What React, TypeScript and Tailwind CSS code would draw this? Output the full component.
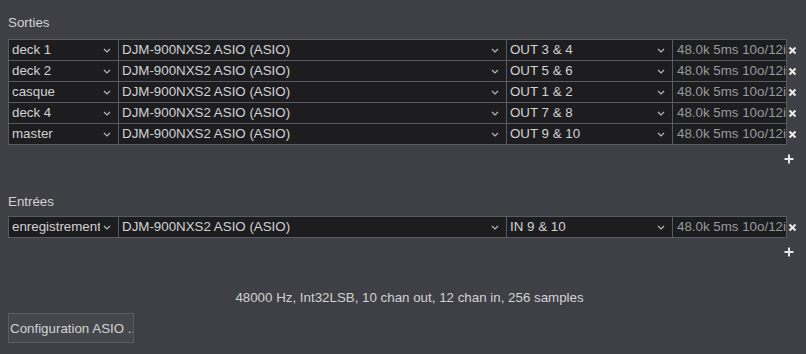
const outputs = [
  { name: 'deck 1', device: 'DJM-900NXS2 ASIO (ASIO)', channel: 'OUT 3 & 4' },
  { name: 'deck 2', device: 'DJM-900NXS2 ASIO (ASIO)', channel: 'OUT 5 & 6' },
  { name: 'casque', device: 'DJM-900NXS2 ASIO (ASIO)', channel: 'OUT 1 & 2' },
  { name: 'deck 4', device: 'DJM-900NXS2 ASIO (ASIO)', channel: 'OUT 7 & 8' },
  { name: 'master', device: 'DJM-900NXS2 ASIO (ASIO)', channel: 'OUT 9 & 10' },
];

const inputs = [
  { name: 'enregistrement', device: 'DJM-900NXS2 ASIO (ASIO)', channel: 'IN 9 & 10' },
];

const Chevron = () => (
  <svg width="8" height="5" viewBox="0 0 8 5" className="shrink-0">
    <path d="M1 1l3 3 3-3" fill="none" stroke="#b8b8b8" strokeWidth="1.2" />
  </svg>
);

const SelectCell = ({ value }: { value: string }) => (
  <div className="flex items-center border-r border-b border-[#5a5b60] bg-[#1d1d20] pl-[3px] pr-[7px] overflow-hidden">
    <span className="mr-[3px] flex-1 overflow-hidden whitespace-nowrap">{value}</span>
    <Chevron />
  </div>
);

type Row = { name: string; device: string; channel: string };

const RouteRow = ({ row, first }: { row: Row; first: boolean }) => (
  <div className="flex">
    <div
      className={
        first
          ? 'grid h-[22px] grid-cols-[110px_388px_166px_114px] border-l border-t border-[#5a5b60] leading-[20px]'
          : 'grid h-[21px] grid-cols-[110px_388px_166px_114px] border-l border-[#5a5b60] leading-[20px]'
      }
    >
      <SelectCell value={row.name} />
      <SelectCell value={row.device} />
      <SelectCell value={row.channel} />
      <div className="border-r border-b border-[#5a5b60] bg-[#1d1d20] pl-[4px] overflow-hidden whitespace-nowrap text-[#999a9d]">
        48.0k 5ms 10o/12in
      </div>
    </div>
    {/* remove button */}
    <div className="flex w-[11px] items-center justify-center">
      <svg width="9" height="9" viewBox="0 0 9 9">
        <path d="M1.5 1.5l6 6M7.5 1.5l-6 6" stroke="#ececec" strokeWidth="2" />
      </svg>
    </div>
  </div>
);

const Plus = () => (
  <div className="flex justify-end pr-[4px]">
    <svg width="10" height="16" viewBox="0 0 10 16">
      <path d="M5 3.5v9M0.5 8h9" stroke="#e8e8e8" strokeWidth="2" />
    </svg>
  </div>
);

const App = () => {
  return (
    <div className="h-[354px] w-[806px] overflow-hidden bg-[#3f4045] px-2 pt-[15px] text-[13.33px] leading-[15px] text-[#d2d2d4] [font-family:'Liberation_Sans',Arial,sans-serif]">
      <div>Sorties</div>
      <div className="mt-[9px]">
        {outputs.map((row, i) => (
          <RouteRow key={row.name} row={row} first={i === 0} />
        ))}
      </div>
      <div className="mt-[6px]">
        <Plus />
      </div>

      <div className="mt-[27px]">Entrées</div>
      <div className="mt-[7px]">
        {inputs.map((row) => (
          <RouteRow key={row.name} row={row} first />
        ))}
      </div>
      <div className="mt-[6px]">
        <Plus />
      </div>

      <div className="mt-[30px] pl-[13px] text-center">
        48000 Hz, Int32LSB, 10 chan out, 12 chan in, 256 samples
      </div>
      <button className="mt-[8px] h-[30px] w-[126px] overflow-hidden whitespace-nowrap border border-[#5a5b60] bg-[#46474c] px-[1px] text-left text-[#d2d2d4]">
        Configuration ASIO ...
      </button>
    </div>
  );
};

export default App;
